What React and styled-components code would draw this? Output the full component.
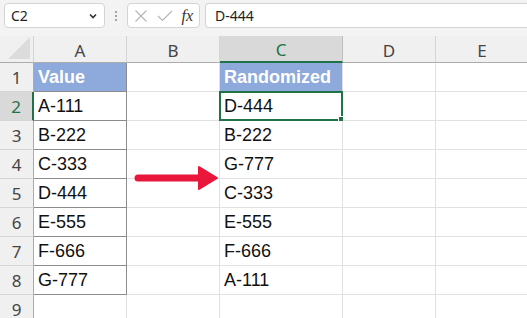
import styled, { createGlobalStyle } from "styled-components";

const Global = createGlobalStyle`
  body { margin: 0; background: #fff; font-family: "Noto Sans", sans-serif; }
`;

const Shell = styled.div`
  width: 527px;
  height: 318px;
  overflow: hidden;
  position: relative;
  background: #fff;
`;

const TopBar = styled.div`
  display: flex;
  align-items: center;
  height: 36px;
  padding: 3px 0 8px 4px;
  box-sizing: border-box;
  background: #f3f3f3;
`;

const Box = styled.div`
  height: 25px;
  box-sizing: border-box;
  background: #fff;
  border: 1px solid #d4d4d4;
  border-radius: 4px;
  display: flex;
  align-items: center;
`;

const NameBox = styled(Box)`
  width: 101px;
  padding: 0 6px 0 6px;
  justify-content: space-between;
  font-size: 14px;
  color: #222;
`;

const Dots = styled.div`
  width: 22px;
  display: flex;
  flex-direction: column;
  align-items: center;
  gap: 2px;
  span { width: 2px; height: 2px; background: #888; border-radius: 1px; }
`;

const FnBox = styled(Box)`
  width: 73px;
  padding: 0 4px 0 6px;
  justify-content: space-between;
  margin-right: 5px;
`;

const Fx = styled.span`
  font-family: "Liberation Serif", serif;
  font-style: italic;
  font-size: 16px;
  color: #333;
  margin-right: 2px;
`;

const Formula = styled(Box)`
  flex: 1;
  border-right: none;
  border-radius: 4px 0 0 4px;
  padding-left: 9px;
  font-size: 14px;
  color: #222;
`;

const Grid = styled.div`
  display: grid;
  grid-template-columns: 34px 93px 93px 123px 93px 93px;
  grid-template-rows: 27px repeat(9, 29px);
`;

const ColHead = styled.div`
  background: ${(p) => (p.$active ? "#d9d9d9" : "#f0f0f0")};
  border-right: 1px solid ${(p) => (p.$active ? "#bdbdbd" : "#d4d4d4")};
  border-bottom: ${(p) => (p.$active ? "2px solid #217346" : "1px solid #ababab")};
  box-sizing: border-box;
  display: flex;
  align-items: center;
  justify-content: center;
  padding-top: 2px;
  font-size: 17px;
  color: ${(p) => (p.$active ? "#217346" : "#444")};
`;

const Corner = styled.div`
  background: #f0f0f0;
  border-right: 1px solid #d4d4d4;
  border-bottom: 1px solid #ababab;
  box-sizing: border-box;
  position: relative;
  &::after {
    content: "";
    position: absolute;
    right: 3px;
    bottom: 3px;
    width: 0;
    height: 0;
    border-left: 22px solid transparent;
    border-bottom: 22px solid #dcdcdc;
  }
`;

const RowHead = styled.div`
  background: ${(p) => (p.$active ? "#d9d9d9" : "#f0f0f0")};
  border-right: ${(p) => (p.$active ? "2px solid #217346" : "1px solid #ababab")};
  border-bottom: 1px solid #d4d4d4;
  box-sizing: border-box;
  display: flex;
  align-items: center;
  justify-content: center;
  font-size: 17px;
  padding-top: 1px;
  color: ${(p) => (p.$active ? "#217346" : "#444")};
`;

const Cell = styled.div`
  position: relative;
  box-sizing: border-box;
  background: ${(p) => (p.$head ? "#8ea9db" : "#fff")};
  border-right: 1px solid ${(p) => (p.$boxed ? "#8c8c8c" : "#e1e1e1")};
  border-bottom: 1px solid ${(p) => (p.$boxed ? "#8c8c8c" : "#e1e1e1")};
  display: flex;
  align-items: flex-end;
  padding: 0 0 3px 4px;
  font-family: "Liberation Sans", sans-serif;
  font-size: 18px;
  font-weight: ${(p) => (p.$head ? 700 : 400)};
  color: ${(p) => (p.$head ? "#fff" : "#111")};
  white-space: nowrap;
`;

const Selection = styled.div`
  position: absolute;
  left: -1px;
  top: -1px;
  right: -1px;
  bottom: -1px;
  border: 2px solid #217346;
  pointer-events: none;
  &::after {
    content: "";
    position: absolute;
    right: -5px;
    bottom: -5px;
    width: 6px;
    height: 6px;
    background: #217346;
    border: 1px solid #fff;
  }
`;

const Arrow = styled.svg`
  position: absolute;
  left: 132px;
  top: 165px;
`;

const cols = ["A", "B", "C", "D", "E"];
const left = ["Value", "A-111", "B-222", "C-333", "D-444", "E-555", "F-666", "G-777"];
const right = ["Randomized", "D-444", "B-222", "G-777", "C-333", "E-555", "F-666", "A-111"];

export default function App() {
  return (
    <Shell>
      <Global />
      <TopBar>
        <NameBox>
          C2
          <svg width="10" height="10" viewBox="0 0 10 10">
            <path d="M2 3.5 L5 6.5 L8 3.5" fill="none" stroke="#333" strokeWidth="1.6" />
          </svg>
        </NameBox>
        <Dots>
          <span />
          <span />
          <span />
        </Dots>
        <FnBox>
          <svg width="14" height="14" viewBox="0 0 14 14">
            <path d="M1.5 1.5 L12.5 12.5 M12.5 1.5 L1.5 12.5" stroke="#b5b5b5" strokeWidth="1.1" />
          </svg>
          <svg width="16" height="12" viewBox="0 0 16 12">
            <path d="M1 6 L5.5 10.5 L15 1" fill="none" stroke="#b5b5b5" strokeWidth="1.1" />
          </svg>
          <Fx>fx</Fx>
        </FnBox>
        <Formula>D-444</Formula>
      </TopBar>
      <Grid>
        <Corner />
        {cols.map((c) => (
          <ColHead key={c} $active={c === "C"}>
            {c}
          </ColHead>
        ))}
        {Array.from({ length: 9 }).flatMap((_, i) => [
          <RowHead key={"r" + i} $active={i === 1}>
            {i + 1}
          </RowHead>,
          <Cell key={"a" + i} $boxed={i < 8} $head={i === 0}>
            {left[i]}
          </Cell>,
          <Cell key={"b" + i} />,
          <Cell key={"c" + i} $head={i === 0}>
            {right[i]}
            {i === 1 && <Selection />}
          </Cell>,
          <Cell key={"d" + i} />,
          <Cell key={"e" + i} />,
        ])}
      </Grid>
      <Arrow width="90" height="26" viewBox="0 0 90 26">
        <path d="M6 13 L70 13" stroke="#e8173b" strokeWidth="7" strokeLinecap="round" />
        <path d="M67 2 L85 13 L67 24 Z" fill="#e8173b" strokeLinejoin="round" stroke="#e8173b" strokeWidth="2" />
      </Arrow>
    </Shell>
  );
}
